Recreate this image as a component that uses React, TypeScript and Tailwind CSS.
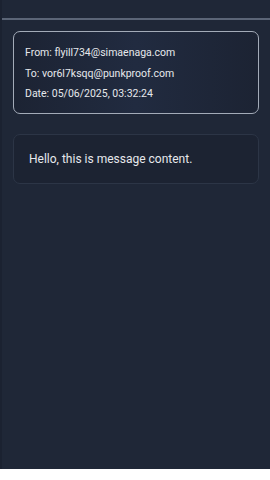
export default function App() {
  return (
    <div className="w-[270px] h-[480px] bg-white" style={{ fontFamily: 'Roboto, "Noto Sans", sans-serif' }}>
      <div className="h-[469px] bg-[#1f2737] border-l-2 border-[#1b2231] flex flex-col">
        <div className="h-[18px]" />
        <div className="h-[2px] bg-[#5b6577]" />
        <div className="px-[11px] pt-[11px]">
          <div className="rounded-[7px] border border-[#a3abb8] bg-gradient-to-r from-[#1c2333] via-[#212b40] to-[#1c2333] px-[11px] pt-[14px] pb-[13px] flex flex-col gap-[7.5px] text-[10.5px] leading-[13px] text-[#e6e8ec]">
            <div>From: flyill734@simaenaga.com</div>
            <div>To: vor6l7ksqq@punkproof.com</div>
            <div>Date: 05/06/2025, 03:32:24</div>
          </div>
          <div className="mt-[20px] h-[50px] rounded-[7px] border border-[#2c3546] bg-[#1c2332] px-[15px] flex items-center text-[12px] text-[#e6e8ec]">
            Hello, this is message content.
          </div>
        </div>
      </div>
    </div>
  );
}
